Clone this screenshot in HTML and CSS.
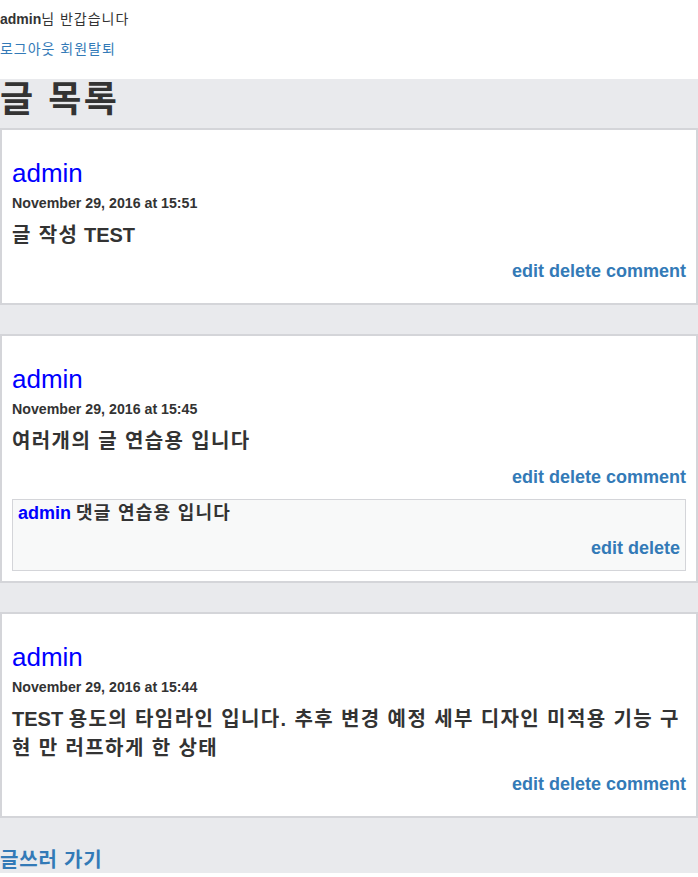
FILE: index.html
```html
<!DOCTYPE html>
<html lang="ko">
<head>
<meta charset="utf-8">
<title>글 목록</title>
<link rel="stylesheet" href="styles.css">
</head>
<body>
<div class="top">
  <p class="welcome"><b>admin</b><span class="ko">님 반갑습니다</span></p>
  <p class="account ko"><a href="#">로그아웃</a> <a href="#">회원탈퇴</a></p>
</div>
<div class="main">
  <h1 class="title ko">글 목록</h1>

  <div class="card">
    <div class="author">admin</div>
    <div class="date">November 29, 2016 at 15:51</div>
    <div class="content"><span class="ko">글 작성</span> TEST</div>
    <div class="actions"><a href="#">edit</a> <a href="#">delete</a> <a href="#">comment</a></div>
  </div>

  <div class="card">
    <div class="author">admin</div>
    <div class="date">November 29, 2016 at 15:45</div>
    <div class="content ko">여러개의 글 연습용 입니다</div>
    <div class="actions"><a href="#">edit</a> <a href="#">delete</a> <a href="#">comment</a></div>
    <div class="comment">
      <div class="comment-body"><span class="comment-author">admin</span> <span class="ko">댓글 연습용 입니다</span></div>
      <div class="comment-actions"><a href="#">edit</a> <a href="#">delete</a></div>
    </div>
  </div>

  <div class="card">
    <div class="author">admin</div>
    <div class="date">November 29, 2016 at 15:44</div>
    <div class="content">TEST <span class="ko">용도의 타임라인 입니다. 추후 변경 예정 세부 디자인 미적용 기능 구현 만 러프하게 한 상태</span></div>
    <div class="actions"><a href="#">edit</a> <a href="#">delete</a> <a href="#">comment</a></div>
  </div>

  <a class="write ko" href="#">글쓰러 가기</a>
</div>
</body>
</html>
```

FILE: styles.css
```css
html, body {
  margin: 0;
  padding: 0;
  background: #fff;
}
body {
  font-family: "Liberation Sans", "Noto Sans CJK KR", sans-serif;
  color: #333;
  font-size: 14px;
}
a {
  color: #337ab7;
  text-decoration: none;
}
.ko {
  letter-spacing: 0.07em;
}
.top {
  padding-top: 9px;
  padding-bottom: 20px;
}
.top p {
  margin: 0;
  line-height: 20px;
  font-size: 14px;
}
.top .welcome {
  margin-bottom: 10px;
}
.main {
  background: #e9eaed;
  display: flex;
  flex-direction: column;
}
.title {
  margin: 0 0 7px 0;
  font-size: 36px;
  line-height: 42px;
  font-weight: bold;
}
.card {
  background: #fff;
  border: 2px solid #d4d5d9;
  padding: 28px 10px 10px 10px;
  margin-bottom: 29px;
}
.author {
  color: #0000ff;
  font-size: 26px;
  line-height: 30px;
}
.date {
  margin-top: 5px;
  font-size: 14.2px;
  line-height: 20px;
  font-weight: bold;
}
.content {
  margin-top: 8px;
  font-size: 20px;
  line-height: 29px;
  font-weight: bold;
}
.actions {
  margin-top: 9px;
  margin-bottom: 10px;
  font-size: 18px;
  line-height: 24px;
  font-weight: bold;
  text-align: right;
}
.comment {
  margin-top: 2px;
  background: #f8f9f9;
  border: 1px solid #d4d5d9;
  padding: 2px 5px 11px 5px;
}
.comment-body {
  font-size: 18px;
  line-height: 22px;
  font-weight: bold;
}
.comment-author {
  color: #0000ff;
}
.comment-actions {
  margin-top: 13px;
  font-size: 18px;
  line-height: 22px;
  font-weight: bold;
  text-align: right;
}
.write {
  align-self: flex-start;
  font-size: 20px;
  line-height: 26px;
  font-weight: bold;
  letter-spacing: 0.04em;
}
```
